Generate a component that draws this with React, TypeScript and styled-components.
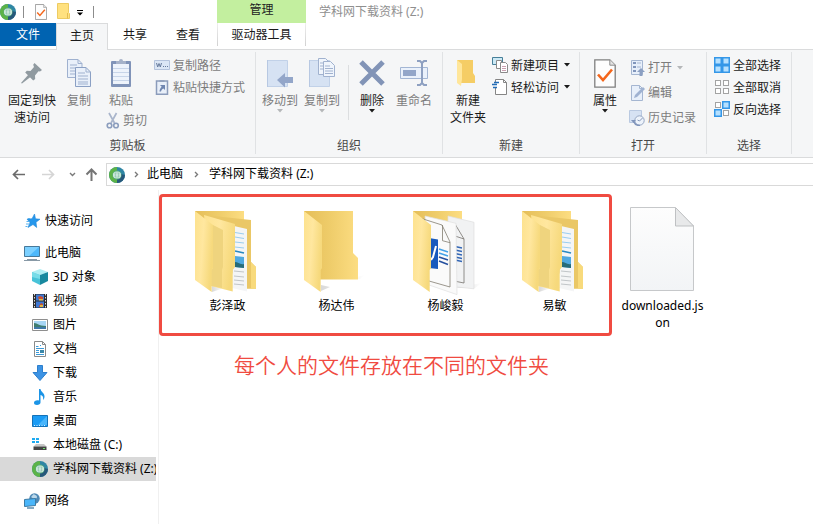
import React from 'react';
import styled, { createGlobalStyle } from 'styled-components';

const GlobalStyle = createGlobalStyle`
  * { box-sizing: border-box; }
  body { margin: 0; background: #fff; }
  body, button {
    font-family: "Noto Sans", "Noto Sans CJK SC", sans-serif;
    font-size: 12px;
    line-height: 17px;
    color: #1a1a1a;
  }
  button { background: none; border: 0; padding: 0; margin: 0; cursor: default; }
  svg { display: block; flex: none; }
`;

const Window = styled.div`
  display: flex;
  flex-direction: column;
  min-height: 100vh;
  overflow: hidden;
`;

/* ---------- title and tabs ---------- */
const Header = styled.header`
  display: grid;
  grid-template-columns: 217px 89px 1fr;
  grid-template-rows: 23px 26px;
`;

const QuickBar = styled.div`
  display: flex;
  align-items: center;
`;

const QuickButton = styled.button<{ $width: number }>`
  display: flex;
  justify-content: center;
  width: ${(p) => p.$width}px;
`;

const QuickDivider = styled.span<{ $after?: number }>`
  width: 1px;
  height: 12px;
  margin: 0 ${(p) => p.$after ?? 0}px 0 7px;
  background: #8c8c8c;
`;

const ContextTitle = styled.div`
  background: #c3ef9f;
  text-align: center;
  line-height: 20px;
  color: #222;
`;

const WindowTitle = styled.div`
  padding-left: 13px;
  line-height: 23px;
  color: #8f8f8f;
`;

const TabRow = styled.nav`
  display: flex;
  align-items: flex-start;
`;

const Tab = styled.button<{ $kind?: 'file' | 'active' | 'context'; $width: number }>`
  width: ${(p) => p.$width}px;
  height: ${(p) => (p.$kind === 'active' ? 27 : 23)}px;
  padding-bottom: ${(p) => (p.$kind === 'active' ? 3 : 0)}px;
  position: relative;
  z-index: 1;
  ${(p) => p.$kind === 'file' && 'background: #0063b1; color: #fff;'}
  ${(p) => p.$kind === 'active' && 'background: #f5f6f7; border: 1px solid #dadbdc; border-bottom: 0;'}
  ${(p) =>
    p.$kind === 'context' &&
    'border: solid; border-width: 0 1px; border-image: linear-gradient(#f0f0f0, #d0d0d0) 1;'}
`;

/* ---------- ribbon ---------- */
const Ribbon = styled.div`
  display: flex;
  padding: 2px 0 3px;
  background: #f5f6f7;
  border: solid #dadbdc;
  border-width: 1px 0;
`;

const Group = styled.section<{ $width: number }>`
  display: flex;
  flex-direction: column;
  flex: none;
  width: ${(p) => p.$width}px;
  border-right: 1px solid #e0e2e4;
`;

const GroupBody = styled.div<{ $left: number }>`
  display: flex;
  height: 85px;
  padding-left: ${(p) => p.$left}px;
`;

const GroupName = styled.div`
  text-align: center;
  color: #484848;
`;

const BigButton = styled.button<{ $width: number; $off?: boolean }>`
  display: flex;
  flex-direction: column;
  align-items: center;
  align-self: flex-start;
  width: ${(p) => p.$width}px;
  padding-top: 5px;
  white-space: pre-line;
  color: ${(p) => (p.$off ? '#7c7c7c' : '#1a1a1a')};
`;

const BigIcon = styled.span`
  display: grid;
  place-items: center;
  height: 32px;
  margin-bottom: 3px;
`;

const Stack = styled.div<{ $top?: number; $width?: number }>`
  display: flex;
  flex-direction: column;
  align-items: flex-start;
  padding-top: ${(p) => p.$top ?? 0}px;
  ${(p) => p.$width && `width: ${p.$width}px;`}
`;

const SmallButton = styled.button<{ $off?: boolean; $tall?: boolean; $indent?: number }>`
  display: flex;
  align-items: center;
  gap: 3px;
  height: ${(p) => (p.$tall ? 25 : 22)}px;
  margin-left: ${(p) => p.$indent ?? 0}px;
  white-space: nowrap;
  color: ${(p) => (p.$off ? '#7c7c7c' : '#1a1a1a')};
`;

const InnerDivider = styled.span`
  width: 1px;
  height: 55px;
  margin: 13px 0 0 5px;
  background: #dcdee0;
`;

/* ---------- address bar ---------- */
const AddressRow = styled.div`
  display: flex;
  align-items: center;
  height: 32px;
  padding: 1px 0 0 10px;
`;

const NavButton = styled.button<{ $width: number }>`
  display: flex;
  justify-content: center;
  width: ${(p) => p.$width}px;
`;

const AddressBox = styled.div`
  display: flex;
  align-items: center;
  flex: 1;
  height: 23px;
  padding-left: 2px;
  border: 1px solid #d9d9d9;
  border-right: 0;
`;

const Crumb = styled.button`
  padding-bottom: 2px;
  color: #000;
`;

const CrumbArrow = styled.span<{ $width: number }>`
  display: grid;
  place-items: center;
  width: ${(p) => p.$width}px;
`;

/* ---------- body ---------- */
const Main = styled.main`
  display: flex;
  flex: 1;
`;

const Sidebar = styled.aside`
  flex: none;
  width: 159px;
  padding: 19px 2px 8px 0;
  border-right: 1px solid #f0f0f0;
`;

const TreeItem = styled.button<{ $child?: boolean; $gap?: boolean; $selected?: boolean }>`
  display: flex;
  align-items: center;
  gap: 5px;
  width: 100%;
  height: 24px;
  margin-top: ${(p) => (p.$gap ? 8 : 0)}px;
  padding-left: ${(p) => (p.$child ? 32 : 24)}px;
  overflow: hidden;
  white-space: nowrap;
  color: #000;
  background: ${(p) => (p.$selected ? '#d9d9d9' : 'transparent')};
`;

const TreeLabel = styled.span`
  padding-bottom: 2px;
`;

const Content = styled.div`
  flex: 1;
  min-width: 0;
  padding-top: 4px;
`;

const Files = styled.div`
  display: flex;
  align-items: flex-start;
`;

const Marked = styled.div`
  display: flex;
  flex: none;
  padding: 0 0 19px 11px;
  border: 3px solid #f04b41;
  border-radius: 4px;
`;

const FileItem = styled.button<{ $loose?: boolean }>`
  display: flex;
  flex-direction: column;
  align-items: center;
  flex: none;
  width: ${(p) => (p.$loose ? 101 : 109)}px;
  padding-top: 3px;
  margin-top: ${(p) => (p.$loose ? 3 : 0)}px;
  color: #000;
`;

const FileName = styled.span`
  max-width: 86px;
  margin-top: 1px;
  word-break: break-all;
`;

const Note = styled.p`
  margin: 12px 0 0 75px;
  font-family: "Noto Sans CJK SC", sans-serif;
  font-size: 21px;
  font-weight: 350;
  line-height: 32px;
  color: #f04b41;
`;

/* ---------- icons ---------- */
const Caret = ({ color = '#1a1a1a' }: { color?: string }) => (
  <svg width="10" height="4" viewBox="0 0 10 4">
    <path d="M2 0h6L5 3.4z" fill={color} />
  </svg>
);

const Globe = () => (
  <svg width="16" height="16" viewBox="0 0 16 16">
    <circle cx="8" cy="8" r="8" fill="#2f86a4" />
    <path d="M8 0a8 8 0 1 0 0 16z" fill="#5cb347" />
    <path d="M8 16a8 8 0 0 0 8-8l-4-1-4 5z" fill="#27587a" />
    <circle cx="8" cy="8" r="4.600" fill="#58ab80" />
    <ellipse cx="8" cy="8" rx="4" ry="3.600" fill="#e8f6ef" />
    <g fill="none" stroke="#7fbfa4" strokeWidth=".6">
      <ellipse cx="8" cy="8" rx="1.7" ry="3.4" />
      <path d="M4.500 8h7M5 6.200h6M5 9.800h6" />
    </g>
  </svg>
);

const CheckDoc = ({ w, h }: { w: number; h: number }) => (
  <svg width={w} height={h} viewBox="0 0 22 29">
    <path d="M.8.8h15l5.4 5.4v22H.8z" fill="#fdfdfd" stroke="#7f7f7f" strokeWidth="1.3" />
    <path d="M15.8.8v5.4h5.4" fill="#e4e4e4" stroke="#8e8e8e" />
    <path d="M4 15.5l5 5.5 9-10.5" fill="none" stroke="#f4661b" strokeWidth="2.6" />
  </svg>
);

const MiniFolder = () => (
  <svg width="13" height="17" viewBox="0 0 13 17">
    <path d="M.5.5h11v9l1 1v5H.5z" fill="#ffe17f" stroke="#edcb62" />
    <path d="M10.5 10v5.5" stroke="#e3bd50" />
  </svg>
);

const Pin = () => (
  <svg width="22" height="22" viewBox="0 0 22 22" fill="#909aa0">
    <path d="M13.5 1l7.5 7-2 1.5-1.5-.3-3.5 4.3.2 3.5-2 1.5-8-8 1.6-1.8 3.7.3L13 5l-.8-2.2z" />
    <path d="M7.5 12.5l2.3 2.3L1 21.5 0 21z" />
  </svg>
);

const CopyIcon = () => (
  <svg width="26" height="30" viewBox="0 0 26 30" fill="#e9f0fa" stroke="#9fb1cf">
    <path d="M1.5 1.5H12l4 4v14H1.5z" />
    <path d="M12 1.5v4h4M4 7h7M4 10h9M4 13h9M4 16h5" fill="none" />
    <path d="M9.5 9.5H20l4.500 4.500v14.500h-15z" stroke="#8ba0c4" />
    <path d="M20 9.500V14h4.500M12 15h7M12 18h10M12 21h10M12 24h10M12 26h10" fill="none" />
  </svg>
);

const PasteIcon = () => (
  <svg width="22" height="30" viewBox="0 0 22 30">
    <rect x="1" y="3" width="20" height="26" rx="1" fill="#8093b8" />
    <path d="M3 6h16v20H3z" fill="#eef3fb" />
    <path d="M3 10.500h16M3 14.500h16M3 18.500h16M3 22.500h16" stroke="#c8d5e9" />
    <path d="M6 6V3h3a2 2 0 0 1 4 0h3v3z" fill="#a6b2c9" />
  </svg>
);

const ScissorIcon = () => (
  <svg width="14" height="17" viewBox="0 0 14 17" fill="none" stroke="#8b9dbd">
    <path d="M3 1l5.500 10M10.500 1L5 11" strokeWidth="1.700" stroke="#a9b5cb" />
    <circle cx="3.500" cy="13.500" r="2.300" strokeWidth="1.600" />
    <circle cx="10" cy="13.500" r="2.300" strokeWidth="1.600" />
  </svg>
);

const PathIcon = () => (
  <svg width="16" height="16" viewBox="0 0 16 16" fill="none">
    <path d="M.5 3.500h15v9H.5z" fill="#dbe6f5" stroke="#b4c3dc" />
    <path d="M2.500 6l1.200 4L5 6.500 6.300 10l1.200-4M9 9.500h1M11 9.500h1M13 9.500h1" stroke="#667a9c" />
  </svg>
);

const ShortcutIcon = () => (
  <svg width="16" height="16" viewBox="0 0 16 16">
    <path d="M2.500 2h11v13.200h-11z" fill="#e8eff9" stroke="#8b9cbb" strokeWidth="1.500" />
    <path d="M5.500 3V1h5v2z" fill="#93a2bd" />
    <path d="M6 6h5v5L9.400 9.400C8 10 7.500 11 7 12.500H5.500c0-2 .9-3.400 2.200-4.800z" fill="#6f86b0" />
  </svg>
);

const PageBase = () => (
  <g>
    <path d="M1.500 3.500h20v26h-20z" fill="#d6e2f3" stroke="#c1d1e8" />
    <path d="M1.500 3v27" stroke="#b7c8e2" />
  </g>
);

const MoveIcon = () => (
  <svg width="28" height="32" viewBox="0 0 28 32">
    <PageBase />
    <path d="M11 23l8-7v4h8v6h-8v4.500z" fill="#93a6c9" />
  </svg>
);

const CopyToIcon = () => (
  <svg width="28" height="32" viewBox="0 0 28 32">
    <PageBase />
    <g fill="#f0f5fc" stroke="#a1b2cf">
      <path d="M10.500 1.500h7l3 3v13h-10z" />
      <path d="M15.500 4.500h7l4 4v11h-11z" />
      <path d="M12 6h3M12 9h3M12 12h3M17 9h5M17 11.500h8M17 14h8M17 16.500h8" />
    </g>
  </svg>
);

const DeleteIcon = () => (
  <svg width="26" height="26" viewBox="0 0 26 26">
    <path d="M2 2l22 22M24 2L2 24" stroke="#8294b7" strokeWidth="5" />
  </svg>
);

const RenameIcon = () => (
  <svg width="28" height="28" viewBox="0 0 28 28" fill="none">
    <path d="M.5 8.500h27v11H.5z" fill="#eaf1fb" stroke="#a3b6d4" />
    <path d="M3 11h13v6H3z" fill="#93a6c9" />
    <path d="M17 2h3l2 2 2-2h3M22 3v22M17 26h3l2-2 2 2h3" stroke="#8ea0c1" strokeWidth="2" />
  </svg>
);

const NewFolderIcon = () => (
  <svg width="24" height="28" viewBox="0 0 24 28">
    <path d="M1 1h16v13l2 3v7H5z" fill="#f5cd65" />
    <path d="M1 1l5 4v15l-1 7-4-3z" fill="#ffe69a" />
  </svg>
);

const NewItemIcon = () => (
  <svg width="16" height="16" viewBox="0 0 16 16" fill="#fff">
    <path d="M.5.500h10v7H.5z" fill="#cce9f5" stroke="#467f99" />
    <path d="M4.500 3.500h5v8h-5z" stroke="#8a8a8a" />
    <path d="M8.500 5.500h5l2 2v8h-7z" stroke="#8a8a8a" />
    <path d="M10 9.500h4M10 11.500h4M10 13.500h4" stroke="#ca9fb0" />
  </svg>
);

const EasyIcon = () => (
  <svg width="16" height="16" viewBox="0 0 16 16" fill="none">
    <path d="M3.500 4V.500h8l3 3v12h-11V9" fill="#fff" stroke="#858585" />
    <path d="M11.500.500v3h3" stroke="#858585" />
    <path d="M2 3.500h5M0 5.500h5M1 8.500h4" stroke="#236cb6" strokeWidth="1.400" />
  </svg>
);

const OpenIcon = () => (
  <svg width="16" height="16" viewBox="0 0 16 16">
    <path d="M2.500.500h11v14h-11z" fill="#e7effa" stroke="#a5b6d1" />
    <path d="M4 2h3v2H4zM4 6h3v2H4zM4 10h3v2H4z" fill="#8196bc" />
    <path d="M8 3h4M8 7h4" stroke="#a5b6d1" />
    <path d="M12 8l4 4h-2.500v4h-3v-4H8z" fill="#8b9fc2" />
  </svg>
);

const EditIcon = () => (
  <svg width="16" height="16" viewBox="0 0 16 16">
    <path d="M2.500.500h8l3 3v12h-11z" fill="#e7effa" stroke="#a5b6d1" />
    <path d="M10.500.500v3h3" fill="none" stroke="#a5b6d1" />
    <path d="M5 13l1-3 8-8 2 2-8 8z" fill="#9fb2d1" />
  </svg>
);

const HistoryIcon = () => (
  <svg width="16" height="16" viewBox="0 0 16 16">
    <path d="M.5.500h12v12H.5z" fill="#d6e2f3" stroke="#b9c9e1" />
    <circle cx="10.500" cy="10.500" r="4.700" fill="#edf3fb" stroke="#95a6c3" />
    <path d="M10.500 11l3-3M10.500 11l-2-1" stroke="#8598b9" />
    <path d="M2 10h5l-2.500 3z" fill="#7f94ba" />
    <path d="M5 12c1 3 4 3.500 6 3.500" fill="none" stroke="#7f94ba" strokeWidth="1.500" />
  </svg>
);

const cells = [
  [0, 0],
  [1, 0],
  [0, 1],
  [1, 1],
];
const SelectIcon = ({ on }: { on: number[] }) => (
  <svg width="16" height="16" viewBox="0 0 16 16">
    {cells.map(([x, y], i) =>
      on.includes(i) ? (
        <rect key={i} x={x * 8 + 0.75} y={y * 8 + 0.75} width="6.500" height="6.500" fill="#b5e0ff" stroke="#3497e8" strokeWidth="1.500" />
      ) : (
        <rect key={i} x={x * 8 + 1.5} y={y * 8 + 1.5} width="5" height="5" fill="#fff" stroke="#a3a3a3" />
      ),
    )}
  </svg>
);

const Arrow = ({ dir, color }: { dir: 'left' | 'right' | 'up'; color: string }) => (
  <svg width="13" height="13" viewBox="0 0 13 13" fill="none" stroke={color} strokeWidth="1.700">
    {dir === 'left' && <path d="M13 6.500H1.500M6 2L1.500 6.500 6 11" />}
    {dir === 'right' && <path d="M0 6.500h11.500M7 2l4.500 4.500L7 11" />}
    {dir === 'up' && <path d="M6.500 13V1.500M1.500 6.500l5-5 5 5" strokeWidth="2" />}
  </svg>
);

const Chevron = ({ down }: { down?: boolean }) => (
  <svg width="7" height="7" viewBox="0 0 7 7" fill="none" stroke="#7a7a7a" strokeWidth="1.400">
    <path d={down ? 'M1 2l2.500 2.500L6 2' : 'M2 1l2.500 2.500L2 6'} />
  </svg>
);

const Tree16 = ({ children }: { children: React.ReactNode }) => (
  <svg width="16" height="16" viewBox="0 0 16 16">
    {children}
  </svg>
);

const StarIcon = () => (
  <Tree16>
    <path d="M10.500 1l1 4.800 4.500.4-4 3 .7 5.300-3.700-3-5 3 2-4.800L3 6l5-.2z" fill="#2597ec" stroke="#2488d8" strokeWidth=".6" />
    <path d="M2.500 8.500h3M2 11h3M1.500 13.500h2M4 5.500h2" stroke="#5cb4ef" />
  </Tree16>
);
const PcIcon = () => (
  <Tree16>
    <path d="M.5 1.500h15v10H.5z" fill="#4db8fb" stroke="#47799a" />
    <path d="M1 2h14L5 11H1z" fill="#7cd0ff" />
    <path d="M3 14.500h10M0 15.500h16" stroke="#8899a6" />
  </Tree16>
);
const CubeIcon = () => (
  <Tree16>
    <path d="M0 3l8-3 8 3-8 3z" fill="#aeeef3" />
    <path d="M0 3l8 3v10l-8-4z" fill="#48c3d8" />
    <path d="M16 3L8 6v10l8-4z" fill="#18899f" />
    <path d="M0 3l8 3v4L0 8z" fill="#77dce8" />
  </Tree16>
);
const VideoIcon = () => (
  <Tree16>
    <path d="M1 1h14v14H1z" fill="#2d2d2d" />
    <path d="M4 1.500h8v6H4zM4 8.500h8v6H4z" fill="#3f78d2" />
    <path d="M6 4l2-1 3 1v3H7zM7 13l2-3 2 1v3H7z" fill="#c84f32" />
    <path d="M7 6h4v1.500H7zM8 12h3v2H8z" fill="#dfb943" />
    <path d="M2.500 1v14M13.500 1v14" stroke="#ddd" strokeDasharray="1.500 1.500" />
  </Tree16>
);
const PictureIcon = () => (
  <Tree16>
    <path d="M.5 2.500h15v11H.5z" fill="#fff" stroke="#8e8e8e" />
    <path d="M2 4h12v8H2z" fill="#a7d6f5" />
    <path d="M2 6c4 0 4 3 12 3v3H2z" fill="#3f7d70" />
    <path d="M2 10h12v2H2z" fill="#3f78a9" />
  </Tree16>
);
const DocIcon = () => (
  <Tree16>
    <path d="M2.500.500h8l3 3v12h-11z" fill="#fff" stroke="#8a8a8a" />
    <path d="M10.500.500v3h3" fill="none" stroke="#8a8a8a" />
    <path d="M4 5.500h2.500M8 4.500h1M4 7.500h8M4 9.500h3M4 11.500h3M4 13.500h8M8 7.500h4" stroke="#3c9ad8" />
    <path d="M8 9h4v3H8z" fill="#3b87a8" />
  </Tree16>
);
const DownloadIcon = () => (
  <Tree16>
    <path d="M5.500.500h5v7h4.500L8 15.500 1 7.500h4.500z" fill="#3c93e4" stroke="#2d7fcd" />
  </Tree16>
);
const MusicIcon = () => (
  <Tree16>
    <path d="M7 0h1.500c.3 3 4.500 4 4 8-.2 1.500-1 2.500-1.500 3 .8-3-.5-4.500-2.500-5v7.500C8.500 15 7 16 5 16s-3-1-3-2.300C2 12 4 11 7 11.500z" fill="#1b94e6" />
  </Tree16>
);
const DesktopIcon = () => (
  <Tree16>
    <path d="M.5 2.500h15v11H.5z" fill="#1b9cf5" stroke="#1472b8" />
    <path d="M15 3v9H6z" fill="#49b6fc" />
    <path d="M2 12.500h11" stroke="#d7efff" strokeDasharray="1 1.500" />
  </Tree16>
);
const DiskIcon = () => (
  <Tree16>
    <path d="M0 1h3v2H0zM4 1h3v2H4zM0 4h3v2H0zM4 4h3v2H4z" fill="#1eaaf1" />
    <path d="M4 7h8l2.500 2.500h-13z" fill="#c6c6c6" />
    <path d="M1.500 9.500h13V13h-13z" fill="#454545" />
    <path d="M11 11.500h2" stroke="#6fe36c" />
  </Tree16>
);
const NetworkIcon = () => (
  <Tree16>
    <circle cx="10.500" cy="5.500" r="5.200" fill="#4f89b5" />
    <path d="M7 4c1-1 2-2.500 3-3 1 1.500 3 1 3 3s-2 1-3 2z" fill="#bcd8ea" />
    <path d="M.500 6.500l11-1v7l-11 1z" fill="#4ab6fa" stroke="#3d7ba4" />
    <path d="M3 15h7" stroke="#5d8eaf" strokeWidth="1.500" />
  </Tree16>
);

const FolderDefs = () => (
  <svg width="0" height="0" aria-hidden="true">
    <defs>
      <linearGradient id="flap" x2="1" y2=".3">
        <stop offset="0" stopColor="#fde28e" />
        <stop offset=".5" stopColor="#ffe79f" />
        <stop offset="1" stopColor="#f6d97c" />
      </linearGradient>
      <linearGradient id="back">
        <stop offset="0" stopColor="#e5be58" />
        <stop offset=".5" stopColor="#efcd6b" />
        <stop offset="1" stopColor="#fcdd82" />
      </linearGradient>
      <linearGradient id="sheet" x2="0" y2="1">
        <stop offset="0" stopColor="#fdfdfd" />
        <stop offset="1" stopColor="#f2f4f6" />
      </linearGradient>
      <linearGradient id="shade">
        <stop offset="0" stopColor="#aaa" stopOpacity=".45" />
        <stop offset="1" stopColor="#aaa" stopOpacity="0" />
      </linearGradient>
    </defs>
  </svg>
);

const Flap = () => <path d="M15 11l18 14v43l-1.300 2v22L15 80z" fill="url(#flap)" />;

const FolderArt = ({ kind }: { kind: 'empty' | 'nested' | 'word' }) => (
  <svg width="95" height="96" viewBox="0 0 95 96">
    {kind === 'empty' && (
      <>
        <path d="M60 79l16-4-5 4zM32 91l9-4-9-2z" fill="url(#shade)" />
        <path d="M15 11h49v42l5 5v21.500H15z" fill="url(#back)" />
      </>
    )}
    {kind === 'nested' && (
      <>
        <path d="M15 11h49v60H15z" fill="url(#back)" />
        <path d="M32 92l12-4-12-3z" fill="url(#shade)" />
        <path d="M24 15l47 5v42l5 5v21.700H60z" fill="#eac766" />
        <path d="M71 20v42l5 5v21.700h-5z" fill="#f8da7c" />
        <path d="M54 26l13 3v62.500L52 88z" fill="#f4f5f6" />
        <path d="M55 32.500l9 1.500M55 37l9 1.500M55 42l9 1M55 47l9 1" stroke="#9acdf0" />
        <path d="M55 51l9 2" stroke="#2788c2" strokeWidth="1.500" />
        <path d="M55 56l9 1v11l-9-1z" fill="#4fa8df" />
        <path d="M55 62c3 0 5 3 9 2v4l-9-1z" fill="#286c78" />
        <path d="M54 71l10 1M54 76l10 1M54 80l10 1M54 84l10 1" stroke="#c1c5c8" />
        <path d="M24 15l31 9v43l-2.300 3v21.500L31 86z" fill="url(#flap)" />
        <path d="M33 25l10 5v37l-1 3v18l-11-2V70l2-2z" fill="#efd47e" />
      </>
    )}
    {kind === 'word' && (
      <>
        <path d="M15 11h49v60H15z" fill="url(#back)" />
        <path d="M57 88l27-5-7 5z" fill="url(#shade)" />
        <path d="M50 16l26 6.300v66.500L50 86z" fill="#f1f2f3" stroke="#dedede" strokeWidth=".7" />
        <path d="M57 24l9 15v44l-10-2M57 24v12l9 3" fill="none" stroke="#77746e" strokeWidth=".8" />
        <path d="M57 46.500l7 1.500M57 50l7 1.500M57 53.500l7 1.500M57 57l7 1.500M57 60l7 1.500" stroke="#3367b6" strokeWidth="1.300" />
        <path d="M27 16l31 7.300 1 71.300L31 85z" fill="#fafafa" stroke="#e0e0e0" strokeWidth=".7" />
        <path d="M22 18l22 7 8 17v45l-21-6M44.500 25v15.700l7.500 2" fill="none" stroke="#837d71" strokeWidth=".8" />
        <path d="M31 38l9 1.500V69l-9-1z" fill="#185abd" />
        <path d="M33 60l2-3 3-11" fill="none" stroke="#fff" strokeWidth="2" />
        <path d="M41 49l9 3M41 53l9 3" stroke="#42a1e8" strokeWidth="1.500" />
        <path d="M41 57l9 3M41 61l9 3.500" stroke="#244f9e" strokeWidth="1.500" />
      </>
    )}
    <Flap />
  </svg>
);

const BlankFile = () => (
  <svg width="95" height="96" viewBox="0 0 95 96">
    <path d="M15.500 7.500H60L78.500 26v64.500h-63z" fill="url(#sheet)" stroke="#c6c8ca" />
    <path d="M60.500 7.500V26h18z" fill="#e8e9ea" stroke="#bfc1c3" />
  </svg>
);

const people: { name: string; kind: 'empty' | 'nested' | 'word' }[] = [
  { name: '彭泽政', kind: 'nested' },
  { name: '杨达伟', kind: 'empty' },
  { name: '杨峻毅', kind: 'word' },
  { name: '易敏', kind: 'nested' },
];

const places = [
  { name: '3D 对象', Icon: CubeIcon },
  { name: '视频', Icon: VideoIcon },
  { name: '图片', Icon: PictureIcon },
  { name: '文档', Icon: DocIcon },
  { name: '下载', Icon: DownloadIcon },
  { name: '音乐', Icon: MusicIcon },
  { name: '桌面', Icon: DesktopIcon },
  { name: '本地磁盘 (C:)', Icon: DiskIcon },
  { name: '学科网下载资料 (Z:)', Icon: Globe, selected: true },
];

export default function App() {
  return (
    <Window>
      <GlobalStyle />
      <Header>
        <QuickBar>
          <Globe />
          <QuickDivider $after={5} />
          <QuickButton $width={24} aria-label="属性"><CheckDoc w={12} h={16} /></QuickButton>
          <QuickButton $width={21} aria-label="新建文件夹"><MiniFolder /></QuickButton>
          <QuickButton $width={12} aria-label="自定义">
            <svg width="8" height="8" viewBox="0 0 8 8"><path d="M1 2h6v1H1zM1 4.500h6L4 7.500z" /></svg>
          </QuickButton>
          <QuickDivider />
        </QuickBar>
        <ContextTitle>管理</ContextTitle>
        <WindowTitle>学科网下载资料 (Z:)</WindowTitle>
        <TabRow>
          <Tab $kind="file" $width={56}>文件</Tab>
          <Tab $kind="active" $width={52}>主页</Tab>
          <Tab $width={54}>共享</Tab>
          <Tab $width={52}>查看</Tab>
        </TabRow>
        <TabRow>
          <Tab $kind="context" $width={89}>驱动器工具</Tab>
        </TabRow>
      </Header>

      <Ribbon>
        <Group $width={256}>
          <GroupBody $left={4}>
            <BigButton $width={56}><BigIcon><Pin /></BigIcon>{'固定到快\n速访问'}</BigButton>
            <BigButton $width={38} $off><BigIcon><CopyIcon /></BigIcon>复制</BigButton>
            <Stack $width={56}>
              <BigButton $width={46} $off><BigIcon><PasteIcon /></BigIcon>粘贴</BigButton>
              <SmallButton $off $indent={8}><ScissorIcon />剪切</SmallButton>
            </Stack>
            <Stack $top={2}>
              <SmallButton $off><PathIcon />复制路径</SmallButton>
              <SmallButton $off><ShortcutIcon />粘贴快捷方式</SmallButton>
            </Stack>
          </GroupBody>
          <GroupName>剪贴板</GroupName>
        </Group>
        <Group $width={187}>
          <GroupBody $left={3}>
            <BigButton $width={42} $off><BigIcon><MoveIcon /></BigIcon>移动到<Caret color="#b5b7b9" /></BigButton>
            <BigButton $width={42} $off><BigIcon><CopyToIcon /></BigIcon>复制到<Caret color="#b5b7b9" /></BigButton>
            <InnerDivider />
            <BigButton $width={46}><BigIcon><DeleteIcon /></BigIcon>删除<Caret /></BigButton>
            <BigButton $width={38} $off><BigIcon><RenameIcon /></BigIcon>重命名</BigButton>
          </GroupBody>
          <GroupName>组织</GroupName>
        </Group>
        <Group $width={137}>
          <GroupBody $left={1}>
            <BigButton $width={48}><BigIcon><NewFolderIcon /></BigIcon>{'新建\n文件夹'}</BigButton>
            <Stack $top={2}>
              <SmallButton><NewItemIcon />新建项目<Caret /></SmallButton>
              <SmallButton><EasyIcon />轻松访问<Caret /></SmallButton>
            </Stack>
          </GroupBody>
          <GroupName>新建</GroupName>
        </Group>
        <Group $width={127}>
          <GroupBody $left={1}>
            <BigButton $width={48}><BigIcon><CheckDoc w={22} h={29} /></BigIcon>属性<Caret /></BigButton>
            <Stack $top={3}>
              <SmallButton $off $tall><OpenIcon />打开<Caret color="#b5b7b9" /></SmallButton>
              <SmallButton $off $tall><EditIcon />编辑</SmallButton>
              <SmallButton $off $tall><HistoryIcon />历史记录</SmallButton>
            </Stack>
          </GroupBody>
          <GroupName>打开</GroupName>
        </Group>
        <Group $width={85}>
          <GroupBody $left={7}>
            <Stack $top={2}>
              <SmallButton><SelectIcon on={[0, 1, 2, 3]} />全部选择</SmallButton>
              <SmallButton><SelectIcon on={[]} />全部取消</SmallButton>
              <SmallButton><SelectIcon on={[1, 2]} />反向选择</SmallButton>
            </Stack>
          </GroupBody>
          <GroupName>选择</GroupName>
        </Group>
      </Ribbon>

      <AddressRow>
        <NavButton $width={17} aria-label="后退"><Arrow dir="left" color="#6b6b6b" /></NavButton>
        <NavButton $width={42} aria-label="前进"><Arrow dir="right" color="#d5d5d5" /></NavButton>
        <NavButton $width={7} aria-label="最近"><Chevron down /></NavButton>
        <NavButton $width={30} aria-label="上移"><Arrow dir="up" color="#757575" /></NavButton>
        <AddressBox>
          <Globe />
          <CrumbArrow $width={22}><Chevron /></CrumbArrow>
          <Crumb>此电脑</Crumb>
          <CrumbArrow $width={26}><Chevron /></CrumbArrow>
          <Crumb>学科网下载资料 (Z:)</Crumb>
        </AddressBox>
      </AddressRow>

      <Main>
        <Sidebar>
          <TreeItem><StarIcon /><TreeLabel>快速访问</TreeLabel></TreeItem>
          <TreeItem $gap><PcIcon /><TreeLabel>此电脑</TreeLabel></TreeItem>
          {places.map(({ name, Icon, selected }) => (
            <TreeItem key={name} $child $selected={selected}><Icon /><TreeLabel>{name}</TreeLabel></TreeItem>
          ))}
          <TreeItem $gap><NetworkIcon /><TreeLabel>网络</TreeLabel></TreeItem>
        </Sidebar>
        <Content>
          <FolderDefs />
          <Files>
            <Marked>
              {people.map((p) => (
                <FileItem key={p.name}>
                  <FolderArt kind={p.kind} />
                  <FileName>{p.name}</FileName>
                </FileItem>
              ))}
            </Marked>
            <FileItem $loose>
              <BlankFile />
              <FileName>downloaded.json</FileName>
            </FileItem>
          </Files>
          <Note>每个人的文件存放在不同的文件夹</Note>
        </Content>
      </Main>
    </Window>
  );
}
